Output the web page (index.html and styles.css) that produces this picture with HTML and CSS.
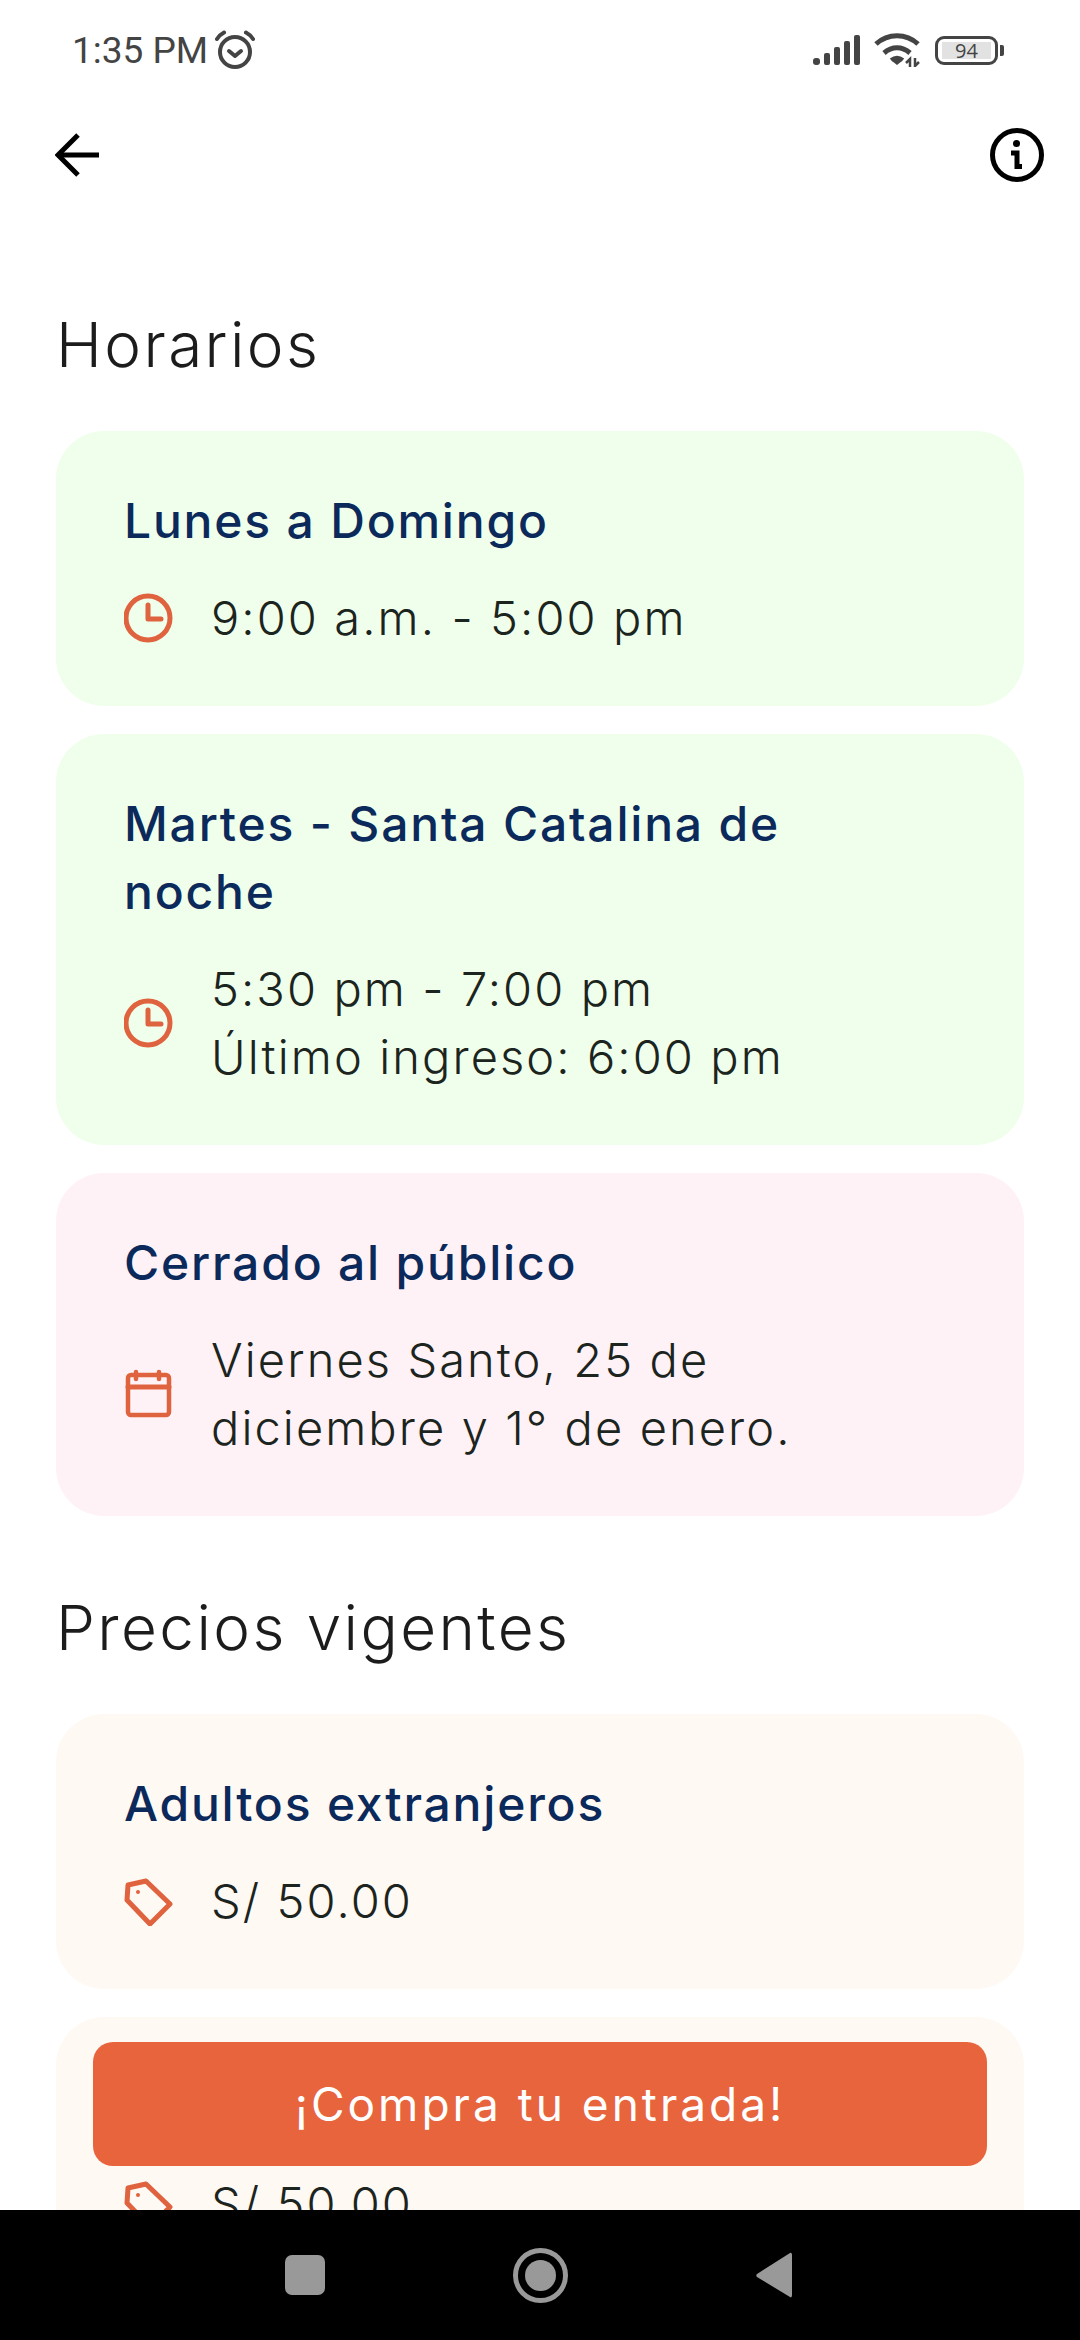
FILE: index.html
```html
<!DOCTYPE html>
<html lang="es">
<head>
    <meta charset="UTF-8">
    <title>Horarios y precios</title>
    <link rel="stylesheet" href="styles.css">
</head>
<body>
<div class="screen">
    <div class="status">
        <div class="status-left">
            <span class="time">1:35 PM</span>
            <svg class="alarm" viewBox="0 0 40 40" fill="none" stroke="#444" stroke-width="4" stroke-linecap="round" stroke-linejoin="round">
                <circle cx="20" cy="22" r="15"/>
                <path d="M14 21l6 5 6-5"/>
                <path d="M2 9c2-3 4-5 7-6.500"/>
                <path d="M38 9c-2-3-4-5-7-6.500"/>
            </svg>
        </div>
        <div class="status-right">
            <svg class="signal" viewBox="0 0 48 30" fill="#444">
                <rect x="0" y="23" width="7" height="7" rx="3"/>
                <rect x="11" y="18" width="6" height="12" rx="2"/>
                <rect x="21" y="12" width="6" height="18" rx="2"/>
                <rect x="31" y="6" width="6" height="24" rx="2"/>
                <rect x="41" y="0" width="6" height="30" rx="2"/>
            </svg>
            <svg class="wifi" viewBox="0 0 46 34" fill="none" stroke="#444" stroke-width="5">
                <path d="M2 11c12-11 30-11 42 0"/>
                <path d="M10 20c8-7 18-7 26 0"/>
                <path d="M18 28l5-4 5 4-5 4z" fill="#444" stroke="none"/>
                <path d="M17 27c4-3 8-3 12 0" stroke-width="4"/>
                <path d="M36 34v-8l-4 4M41 25v8l4-4" stroke-width="2.500"/>
            </svg>
            <div class="battery">
                <div class="battery-body"><span class="battery-level">94</span></div>
                <div class="battery-nub"></div>
            </div>
        </div>
    </div>

    <div class="appbar">
        <svg class="back" viewBox="0 0 44 44" fill="none" stroke="#000" stroke-width="5">
            <path d="M44 22H4"/>
            <path d="M23 2L3 22l20 20"/>
        </svg>
        <svg class="info" viewBox="0 0 54 54" fill="none" stroke="#000" stroke-width="5">
            <circle cx="27" cy="27" r="24.500"/>
            <circle cx="26.500" cy="15.500" r="3.500" fill="#000" stroke="none"/>
            <path d="M21 25h6v13.500h5" stroke-width="5"/>
        </svg>
    </div>

    <div class="main">
        <h2 class="section-title first">Horarios</h2>

        <div class="card green">
            <h3 class="card-title">Lunes a Domingo</h3>
            <div class="row">
                <svg class="icon" viewBox="0 0 50 50" fill="none" stroke="#E0633F" stroke-width="5" stroke-linecap="round" stroke-linejoin="round">
                    <circle cx="24" cy="25" r="22"/>
                    <path d="M24 12v14h13"/>
                </svg>
                <p class="row-text">9:00 a.m. - 5:00 pm</p>
            </div>
        </div>

        <div class="card green">
            <h3 class="card-title">Martes - Santa Catalina de<br>noche</h3>
            <div class="row">
                <svg class="icon" viewBox="0 0 50 50" fill="none" stroke="#E0633F" stroke-width="5" stroke-linecap="round" stroke-linejoin="round">
                    <circle cx="24" cy="25" r="22"/>
                    <path d="M24 12v14h13"/>
                </svg>
                <p class="row-text">5:30 pm - 7:00 pm<br>Último ingreso: 6:00 pm</p>
            </div>
        </div>

        <div class="card pink">
            <h3 class="card-title">Cerrado al público</h3>
            <div class="row">
                <svg class="icon" viewBox="0 0 50 50" fill="none" stroke="#E0633F" stroke-width="4.500" stroke-linecap="round" stroke-linejoin="round">
                    <rect x="4" y="6" width="41" height="40" rx="3"/>
                    <path d="M4 18h41" stroke-width="5"/>
                    <path d="M12 3v7M35 3v7"/>
                </svg>
                <p class="row-text">Viernes Santo, 25 de<br>diciembre y 1° de enero.</p>
            </div>
        </div>

        <h2 class="section-title">Precios vigentes</h2>

        <div class="card cream">
            <h3 class="card-title">Adultos extranjeros</h3>
            <div class="row">
                <svg class="icon" viewBox="0 0 50 50" fill="none" stroke="#E0633F" stroke-width="5" stroke-linejoin="round">
                    <path d="M4 9l18-4 24 23-20 20L3 24z"/>
                    <circle cx="14" cy="16" r="2" fill="#E0633F" stroke="none"/>
                </svg>
                <p class="row-text">S/ 50.00</p>
            </div>
        </div>

        <!-- title of this card is hidden by the button -->
        <div class="card cream">
            <div class="card-title">&nbsp;</div>
            <div class="row">
                <svg class="icon" viewBox="0 0 50 50" fill="none" stroke="#E0633F" stroke-width="5" stroke-linejoin="round">
                    <path d="M4 9l18-4 24 23-20 20L3 24z"/>
                    <circle cx="14" cy="16" r="2" fill="#E0633F" stroke="none"/>
                </svg>
                <p class="row-text">S/ 50.00</p>
            </div>
        </div>

        <a class="buy" href="#">¡Compra tu entrada!</a>
    </div>

    <div class="navbar">
        <div class="nav-square"></div>
        <div class="nav-home"><div class="nav-dot"></div></div>
        <svg class="nav-back" viewBox="0 0 36 46" fill="#999">
            <path d="M34 1c1-.5 2 0 2 2v40c0 2-1 3-2 2L1 25c-1-1-1-2 0-3z"/>
        </svg>
    </div>
</div>
</body>
</html>
```

FILE: styles.css
```css
/* page */
html, body {
    margin: 0;
    padding: 0;
    background: #fff;
}
.screen {
    width: 1080px;
    height: 2340px;
    display: flex;
    flex-direction: column;
    overflow: hidden;
    font-family: Inter, "Open Sans", sans-serif;
}

/* status bar */
.status {
    height: 100px;
    flex: none;
    display: flex;
    align-items: center;
    justify-content: space-between;
    padding: 0 76px 0 72px;
}
.status-left, .status-right {
    display: flex;
    align-items: center;
}
.time {
    font-family: Roboto, sans-serif;
    font-size: 37px;
    color: #444;
}
.alarm {
    width: 40px;
    height: 40px;
    margin-left: 7px;
}
.signal {
    width: 48px;
    height: 30px;
}
.wifi {
    width: 46px;
    height: 34px;
    margin-left: 13px;
}
.battery {
    display: flex;
    align-items: center;
    margin-left: 15px;
}
.battery-body {
    width: 63px;
    height: 29px;
    box-sizing: border-box;
    border: 3px solid #444;
    border-radius: 9px;
    padding: 3px 4px;
    display: flex;
}
.battery-level {
    flex: 1;
    background: #e2e2e2;
    color: #444;
    font-family: "Open Sans", sans-serif;
    font-size: 20px;
    line-height: 17px;
    text-align: center;
}
.battery-nub {
    width: 4px;
    height: 11px;
    margin-left: 2px;
    background: #444;
    border-radius: 0 2px 2px 0;
}

/* top bar */
.appbar {
    height: 110px;
    flex: none;
    display: flex;
    align-items: center;
    justify-content: space-between;
    padding: 0 36px 0 55px;
}
.back {
    width: 44px;
    height: 44px;
}
.info {
    width: 54px;
    height: 54px;
}

/* content */
.main {
    flex: 1;
    min-height: 0;
    position: relative;
    overflow: hidden;
    padding: 0 56px;
}
.section-title {
    margin: 72px 0 46px;
    font-size: 62px;
    line-height: 80px;
    font-weight: 300;
    letter-spacing: 2.4px;
    color: #1c1c1c;
}
.section-title.first {
    margin-top: 95px;
}
.card {
    border-radius: 48px;
    padding: 56px 68px 54px;
    margin-bottom: 28px;
}
.green {
    background: #EFFFEB;
}
.pink {
    background: #FEF2F7;
}
.cream {
    background: #FFF9F4;
}
.card-title {
    margin: 0 0 29px;
    font-size: 48px;
    line-height: 68px;
    font-weight: 500;
    letter-spacing: 1.8px;
    color: #0B2A5B;
}
.row {
    display: flex;
    align-items: center;
}
.icon {
    width: 50px;
    height: 50px;
    flex: none;
    margin-right: 37px;
}
.row-text {
    margin: 0;
    font-size: 47px;
    line-height: 68px;
    font-weight: 300;
    letter-spacing: 2.1px;
    color: #1c2420;
}

/* buy button, floats over the list */
.buy {
    position: absolute;
    left: 93px;
    right: 93px;
    bottom: 44px;
    height: 124px;
    display: flex;
    align-items: center;
    justify-content: center;
    background: #E8643D;
    border-radius: 20px;
    color: #fff;
    font-size: 46px;
    letter-spacing: 3px;
    text-decoration: none;
}

/* android nav bar */
.navbar {
    height: 130px;
    flex: none;
    background: #000;
    display: flex;
    align-items: center;
    justify-content: center;
    gap: 188px;
    padding-right: 4px;
    box-sizing: border-box;
}
.nav-square {
    width: 40px;
    height: 40px;
    background: #999;
    border-radius: 7px;
}
.nav-home {
    width: 55px;
    height: 55px;
    box-sizing: border-box;
    border: 5px solid #999;
    border-radius: 50%;
    display: flex;
    align-items: center;
    justify-content: center;
}
.nav-dot {
    width: 31px;
    height: 31px;
    background: #999;
    border-radius: 50%;
}
.nav-back {
    width: 36px;
    height: 46px;
}
```
